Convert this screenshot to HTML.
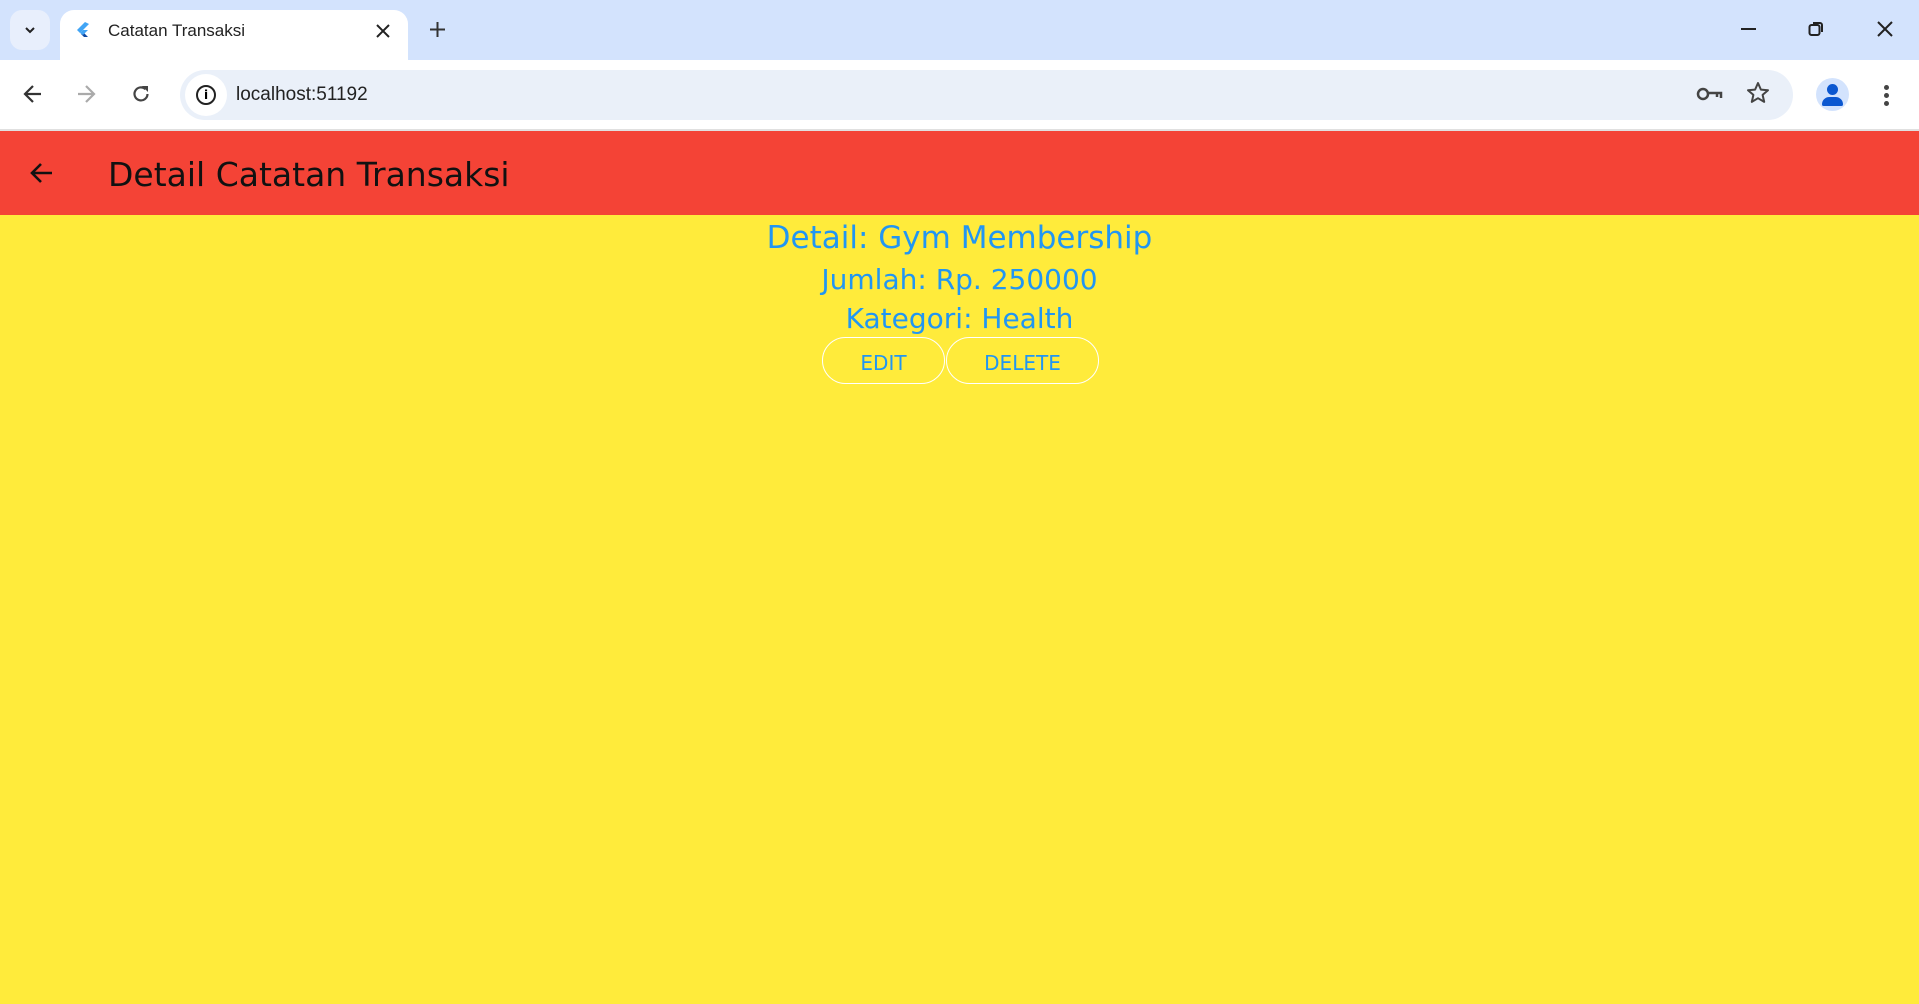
<!DOCTYPE html>
<html><head><meta charset="utf-8"><style>
*{margin:0;padding:0;box-sizing:border-box}
body{width:1919px;height:1004px;overflow:hidden;background:#ffeb3b;font-family:"DejaVu Sans",sans-serif;position:relative}
.abs{position:absolute}
#tabs{left:0;top:0;width:1919px;height:60px;background:#d3e3fd}
#tb{left:0;top:60px;width:1919px;height:69px;background:#fff}
#sep{left:0;top:129px;width:1919px;height:2px;background:#e0e0e0}
#app{left:0;top:131px;width:1919px;height:84px;background:#f44336}
.c{color:#2196f3;text-align:center;width:1919px;left:0;white-space:nowrap}
.btn{border:1.5px solid #fff;border-radius:24px;color:#2196f3;font-size:20px;text-align:center;height:47px;padding-top:2px}
</style></head><body>
<div class="abs" id="tabs"></div>
<div class="abs" style="left:10px;top:10px;width:40px;height:40px;background:#e8effc;border-radius:12px"></div>
<svg class="abs" style="left:24px;top:25px" width="12" height="10"><path d="M2 3l4 4 4-4" stroke="#222" stroke-width="2" fill="none"/></svg>
<div class="abs" style="left:60px;top:10px;width:348px;height:50px;background:#fff;border-radius:14px 14px 0 0"></div>
<svg class="abs" style="left:76px;top:22px" width="14" height="17"><path d="M9 0L1 8l3 3L13 2z" fill="#42a5f5"/><path d="M5 12l3 3h4l-5-5z" fill="#0d47a1"/><path d="M4 11l3-3h5l-5 5z" fill="#42a5f5"/></svg>
<div class="abs" style="left:108px;top:21px;font:17px 'Liberation Sans',sans-serif;color:#222">Catatan Transaksi</div>
<svg class="abs" style="left:376px;top:24px" width="14" height="14"><path d="M1 1l12 12M13 1L1 13" stroke="#222" stroke-width="2"/></svg>
<svg class="abs" style="left:429px;top:21px" width="17" height="17"><path d="M8.5 1v15M1 8.5h15" stroke="#333" stroke-width="2"/></svg>
<div class="abs" style="left:1741px;top:28px;width:15px;height:2px;background:#222"></div>
<svg class="abs" style="left:1808px;top:21px" width="16" height="16"><rect x="1.5" y="4" width="10" height="10" rx="2" stroke="#222" stroke-width="2" fill="none"/><path d="M5 2h7a2 2 0 0 1 2 2v7" stroke="#222" stroke-width="2" fill="none"/></svg>
<svg class="abs" style="left:1877px;top:21px" width="16" height="16"><path d="M1 1l14 14M15 1L1 15" stroke="#222" stroke-width="2"/></svg>
<div class="abs" id="tb"></div>
<svg class="abs" style="left:22px;top:83px" width="22" height="22"><path d="M19 11H4M11 3l-8 8 8 8" stroke="#333" stroke-width="2.2" fill="none"/></svg>
<svg class="abs" style="left:75px;top:83px" width="22" height="22"><path d="M3 11h15M11 3l8 8-8 8" stroke="#aaa" stroke-width="2.2" fill="none"/></svg>
<svg class="abs" style="left:130px;top:83px" width="22" height="22"><path d="M17.5 11a6.5 6.5 0 1 1-2-4.8" stroke="#444" stroke-width="2.2" fill="none"/><path d="M12 3h6v6z" fill="#444"/></svg>
<div class="abs" style="left:180px;top:70px;width:1613px;height:50px;background:#eaf0f9;border-radius:25px"></div>
<div class="abs" style="left:185px;top:74px;width:42px;height:42px;background:#fff;border-radius:50%"></div>
<div class="abs" style="left:196px;top:85px;width:20px;height:20px;border:2px solid #222;border-radius:50%;font:bold 12px 'DejaVu Sans';text-align:center;line-height:16px">i</div>
<div class="abs" style="left:236px;top:84px;font:19px 'Liberation Sans',sans-serif;color:#222">localhost:51192</div>
<svg class="abs" style="left:1696px;top:85px" width="30" height="18"><circle cx="7" cy="9" r="5" stroke="#444" stroke-width="2.5" fill="none"/><path d="M12 8h13v5M21 8v4" stroke="#444" stroke-width="2.5" fill="none"/></svg>
<svg class="abs" style="left:1746px;top:81px" width="24" height="24"><path d="M12 2l2.9 6.6 7.1.6-5.4 4.7 1.6 7L12 17.2 5.8 20.9l1.6-7L2 9.2l7.1-.6z" stroke="#444" stroke-width="2" fill="none" stroke-linejoin="round"/></svg>
<div class="abs" style="left:1816px;top:78px;width:33px;height:33px;background:#d3e3fd;border-radius:50%"></div>
<div class="abs" style="left:1827px;top:84px;width:11px;height:11px;background:#0b57d0;border-radius:50%"></div>
<div class="abs" style="left:1822px;top:97px;width:21px;height:9px;background:#0b57d0;border-radius:9px 9px 2px 2px"></div>
<div class="abs" style="left:1884px;top:85px;width:5px;height:5px;background:#444;border-radius:50%;box-shadow:0 8px #444,0 16px #444"></div>
<div class="abs" id="sep"></div>
<div class="abs" id="app"></div>
<svg class="abs" style="left:29px;top:160px" width="26" height="26"><path d="M23 13H4M12 4l-9 9 9 9" stroke="#111" stroke-width="2.6" fill="none"/></svg>
<div class="abs" style="left:108px;top:155px;font:33px 'DejaVu Sans',sans-serif;color:#111">Detail Catatan Transaksi</div>
<div class="abs c" style="top:220px;font-size:31px">Detail: Gym Membership</div>
<div class="abs c" style="top:263px;font-size:28px">Jumlah: Rp. 250000</div>
<div class="abs c" style="top:302px;font-size:28px">Kategori: Health</div>
<div class="abs btn" style="left:822px;top:337px;width:123px;line-height:47px">EDIT</div>
<div class="abs btn" style="left:946px;top:337px;width:153px;line-height:47px">DELETE</div>
</body></html>
